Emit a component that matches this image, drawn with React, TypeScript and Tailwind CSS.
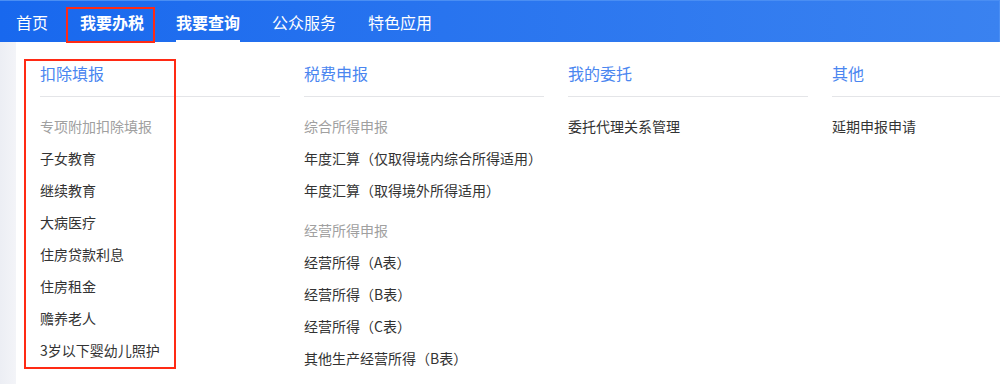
import React from 'react';

type Group = { title?: string; items: string[] };
type Column = { heading: string; groups: Group[] };

const columns: Column[] = [
  {
    heading: '扣除填报',
    groups: [
      {
        title: '专项附加扣除填报',
        items: ['子女教育', '继续教育', '大病医疗', '住房贷款利息', '住房租金', '赡养老人', '3岁以下婴幼儿照护'],
      },
    ],
  },
  {
    heading: '税费申报',
    groups: [
      { title: '综合所得申报', items: ['年度汇算（仅取得境内综合所得适用）', '年度汇算（取得境外所得适用）'] },
      { title: '经营所得申报', items: ['经营所得（A表）', '经营所得（B表）', '经营所得（C表）', '其他生产经营所得（B表）'] },
    ],
  },
  { heading: '我的委托', groups: [{ items: ['委托代理关系管理'] }] },
  { heading: '其他', groups: [{ items: ['延期申报申请'] }] },
];

const App: React.FC = () => {
  return (
    <div className="w-[1000px] h-[384px] overflow-hidden bg-white" style={{ fontFamily: '"Noto Sans CJK SC", "Noto Sans", sans-serif' }}>
      <div className="h-[42px] flex items-center gap-8 pl-4 bg-gradient-to-r from-[#1868ee] to-[#3a82f0] border-t border-[#4a8ef3] border-r text-white text-[16px]">
        <span>首页</span>
        <span className="relative font-bold">
          我要办税
          <span className="absolute left-[-14px] right-[-11px] top-[-3px] h-[36px] border-2 border-[#ff2a14]"></span>
        </span>
        <span className="relative font-bold">
          我要查询
          <span className="absolute left-0 right-0 top-[30px] h-[2px] bg-white"></span>
        </span>
        <span>公众服务</span>
        <span>特色应用</span>
      </div>
      <div className="flex h-[342px]">
        <div className="w-4 shrink-0 bg-gradient-to-r from-[#eceef4] to-[#f3f4f8]"></div>
        <div className="flex-1 flex pl-6 pt-[19px] overflow-hidden">
          {columns.map((col, ci) => (
            <div key={col.heading} className={`relative shrink-0 ${ci === 3 ? 'w-[200px]' : 'w-[264px] pr-6'}`}>
              {ci === 0 && (
                <div className="absolute left-[-16px] top-[-2px] w-[152px] h-[310px] border-2 border-[#ff2a14]"></div>
              )}
              <div className="text-[16px] leading-6 text-[#4a86f0] pb-[11px] border-b border-[#e4e5e8]">{col.heading}</div>
              <div className="mt-[13px]">
                {col.groups.map((g, gi) => (
                  <div key={gi} className={gi > 0 ? 'mt-[8px]' : ''}>
                    {g.title && <div className="h-8 leading-8 text-[14px] text-[#a0a0a0]">{g.title}</div>}
                    {g.items.map((it) => (
                      <div key={it} className="h-8 leading-8 text-[14px] text-[#333333] whitespace-nowrap">{it}</div>
                    ))}
                  </div>
                ))}
              </div>
            </div>
          ))}
        </div>
      </div>
    </div>
  );
};

export default App;
